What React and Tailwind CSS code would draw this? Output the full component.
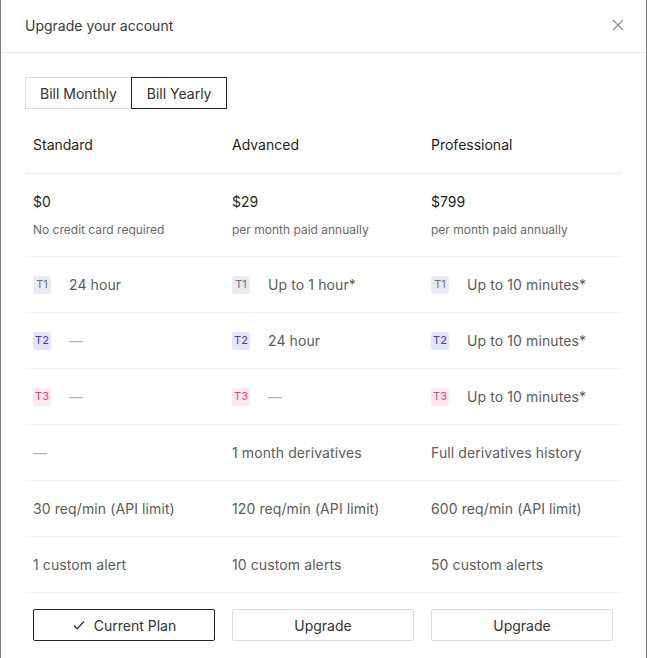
import React, { useState } from "react";

const plans = [
  { name: "Standard", price: "$0", note: "No credit card required" },
  { name: "Advanced", price: "$29", note: "per month paid annually" },
  { name: "Professional", price: "$799", note: "per month paid annually" },
];

const tierStyles = {
  T1: "bg-[#ebeaf3] text-[#6e6d8a]",
  T2: "bg-[#e4e5fd] text-[#4535c9]",
  T3: "bg-[#fde6ee] text-[#e8467c]",
};

// one entry per table row, one value per plan
const tierRows = [
  { tier: "T1", values: ["24 hour", "Up to 1 hour*", "Up to 10 minutes*"] },
  { tier: "T2", values: [null, "24 hour", "Up to 10 minutes*"] },
  { tier: "T3", values: [null, null, "Up to 10 minutes*"] },
];

const featureRows = [
  [null, "1 month derivatives", "Full derivatives history"],
  ["30 req/min (API limit)", "120 req/min (API limit)", "600 req/min (API limit)"],
  ["1 custom alert", "10 custom alerts", "50 custom alerts"],
];

const Dash = () => <span className="text-[#b5b5b5]">—</span>;

const Value = ({ text }) =>
  text ? <span className="text-[#5c5c5c] tracking-[0.1px]">{text}</span> : <Dash />;

const App = () => {
  const [billing, setBilling] = useState("yearly");

  return (
    <div
      className="w-[647px] h-[658px] bg-white border-x border-[#7d7d7d] overflow-hidden text-[14px]"
      style={{ fontFamily: "Inter, 'Noto Sans', sans-serif" }}
    >
      {/* Header */}
      <div className="h-[53px] px-6 flex items-center justify-between border-b border-[#ececec]">
        <h2 className="text-[14px] text-[#3a3a3a] -mt-[2px]">Upgrade your account</h2>
        <button className="text-[#8a8a8a] mr-[-2px] -mt-[2px]">
          <svg width="12" height="12" viewBox="0 0 12 12" fill="none" stroke="currentColor" strokeWidth="1.1">
            <path d="M1 1l10 10M11 1L1 11" />
          </svg>
        </button>
      </div>

      <div className="px-6">
        {/* Billing toggle */}
        <div className="mt-[24px] flex">
          <button
            onClick={() => setBilling("monthly")}
            className={`h-[32px] px-[14px] text-[#333] border ${
              billing === "monthly" ? "border-[#222]" : "border-[#dcdcdc] border-r-0"
            }`}
          >
            Bill Monthly
          </button>
          <button
            onClick={() => setBilling("yearly")}
            className={`h-[32px] px-[15px] text-[#333] border ${
              billing === "yearly" ? "border-[#222]" : "border-[#dcdcdc] border-l-0"
            }`}
          >
            Bill Yearly
          </button>
        </div>

        {/* Plan names */}
        <div className="grid grid-cols-3 pt-[26px] pb-[17px] border-b-[3px] border-[#f4f4f4]">
          {plans.map((p) => (
            <div key={p.name} className="pl-2 leading-[20px] text-[#1f1f1f]">
              {p.name}
            </div>
          ))}
        </div>

        {/* Prices */}
        <div className="grid grid-cols-3 pt-[17px] pb-[18px] border-b border-[#f1f1f1]">
          {plans.map((p) => (
            <div key={p.name} className="pl-2">
              <div className="leading-[20px] text-[#1f1f1f]">{p.price}</div>
              <div className="mt-[10px] text-[12px] leading-[16px] text-[#6a6a6a]">{p.note}</div>
            </div>
          ))}
        </div>

        {/* Response time tiers */}
        {tierRows.map((row) => (
          <div key={row.tier} className="grid grid-cols-3 h-[56px] items-center border-b border-[#f1f1f1]">
            {row.values.map((v, i) => (
              <div key={i} className="pl-2 flex items-center gap-[18px]">
                <span
                  className={`w-[18px] h-[18px] rounded-[3px] flex items-center justify-center text-[11px] ${tierStyles[row.tier]}`}
                >
                  {row.tier}
                </span>
                <Value text={v} />
              </div>
            ))}
          </div>
        ))}

        {/* Other features */}
        {featureRows.map((row, r) => (
          <div key={r} className="grid grid-cols-3 h-[56px] items-center border-b border-[#f1f1f1]">
            {row.map((v, i) => (
              <div key={i} className="pl-2">
                <Value text={v} />
              </div>
            ))}
          </div>
        ))}

        {/* Actions */}
        <div className="grid grid-cols-3 pt-[16px]">
          {plans.map((p, i) => (
            <div key={p.name} className="pl-2">
              {i === 0 ? (
                <button className="w-[182px] h-[32px] border border-[#222] rounded-[2px] flex items-center justify-center gap-[8px] text-[#333]">
                  <svg width="14" height="14" viewBox="0 0 14 14" fill="none" stroke="currentColor" strokeWidth="1.3">
                    <path d="M2 7.5l3.2 3.2L12 3.5" />
                  </svg>
                  Current Plan
                </button>
              ) : (
                <button className="w-[182px] h-[32px] border border-[#dcdcdc] rounded-[2px] text-[#333]">
                  Upgrade
                </button>
              )}
            </div>
          ))}
        </div>
      </div>
    </div>
  );
};

export default App;
